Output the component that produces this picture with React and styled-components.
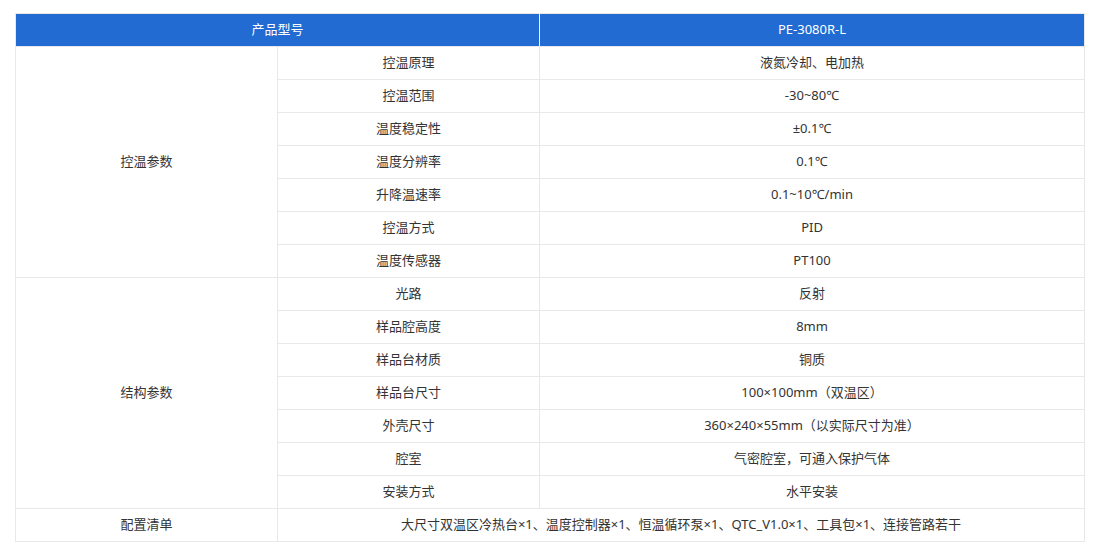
import styled, { createGlobalStyle } from "styled-components";

const GlobalStyle = createGlobalStyle`
  body {
    margin: 0;
    background: #ffffff;
    font-family: "Noto Sans", "Noto Sans CJK SC", sans-serif;
  }
`;

const groups = [
  {
    name: "控温参数",
    rows: [
      ["控温原理", "液氮冷却、电加热"],
      ["控温范围", "-30~80℃"],
      ["温度稳定性", "±0.1℃"],
      ["温度分辨率", "0.1℃"],
      ["升降温速率", "0.1~10℃/min"],
      ["控温方式", "PID"],
      ["温度传感器", "PT100"],
    ],
  },
  {
    name: "结构参数",
    rows: [
      ["光路", "反射"],
      ["样品腔高度", "8mm"],
      ["样品台材质", "铜质"],
      ["样品台尺寸", "100×100mm（双温区）"],
      ["外壳尺寸", "360×240×55mm（以实际尺寸为准）"],
      ["腔室", "气密腔室，可通入保护气体"],
      ["安装方式", "水平安装"],
    ],
  },
];

export default function App() {
  return (
    <>
      <GlobalStyle />
      <Page>
        <SpecTable>
          <colgroup>
            <col style={{ width: 262 }} />
            <col style={{ width: 262 }} />
            <col />
          </colgroup>
          <thead>
            <tr>
              <HeadCell colSpan={2}>产品型号</HeadCell>
              <HeadCell $last>PE-3080R-L</HeadCell>
            </tr>
          </thead>
          <tbody>
            {groups.map((group) =>
              group.rows.map((row, i) => (
                <tr key={group.name + row[0]}>
                  {i === 0 && <Cell rowSpan={group.rows.length}>{group.name}</Cell>}
                  <Cell>{row[0]}</Cell>
                  <Cell>{row[1]}</Cell>
                </tr>
              ))
            )}
            <tr>
              <Cell>配置清单</Cell>
              <Cell colSpan={2}>
                大尺寸双温区冷热台×1、温度控制器×1、恒温循环泵×1、QTC_V1.0×1、工具包×1、连接管路若干
              </Cell>
            </tr>
          </tbody>
        </SpecTable>
      </Page>
    </>
  );
}

const Page = styled.div`
  padding: 13px 0 0 15px;
`;

const SpecTable = styled.table`
  width: 1070px;
  border-collapse: collapse;
  table-layout: fixed;
  font-size: 13px;
  color: #333333;
`;

const HeadCell = styled.th`
  box-sizing: border-box;
  height: 33px;
  padding: 0 0 1px;
  background: #216bd2;
  color: #ffffff;
  font-weight: normal;
  text-align: center;
  line-height: 1;
  border: 1px solid #e8e8e8;
  border-right: ${(p) => (p.$last ? "1px solid #e8e8e8" : "1px solid #f2f5fb")};
`;

const Cell = styled.td`
  box-sizing: border-box;
  height: 33px;
  padding: 0 0 1px;
  text-align: center;
  border: 1px solid #e8e8e8;
  line-height: 1;
`;
